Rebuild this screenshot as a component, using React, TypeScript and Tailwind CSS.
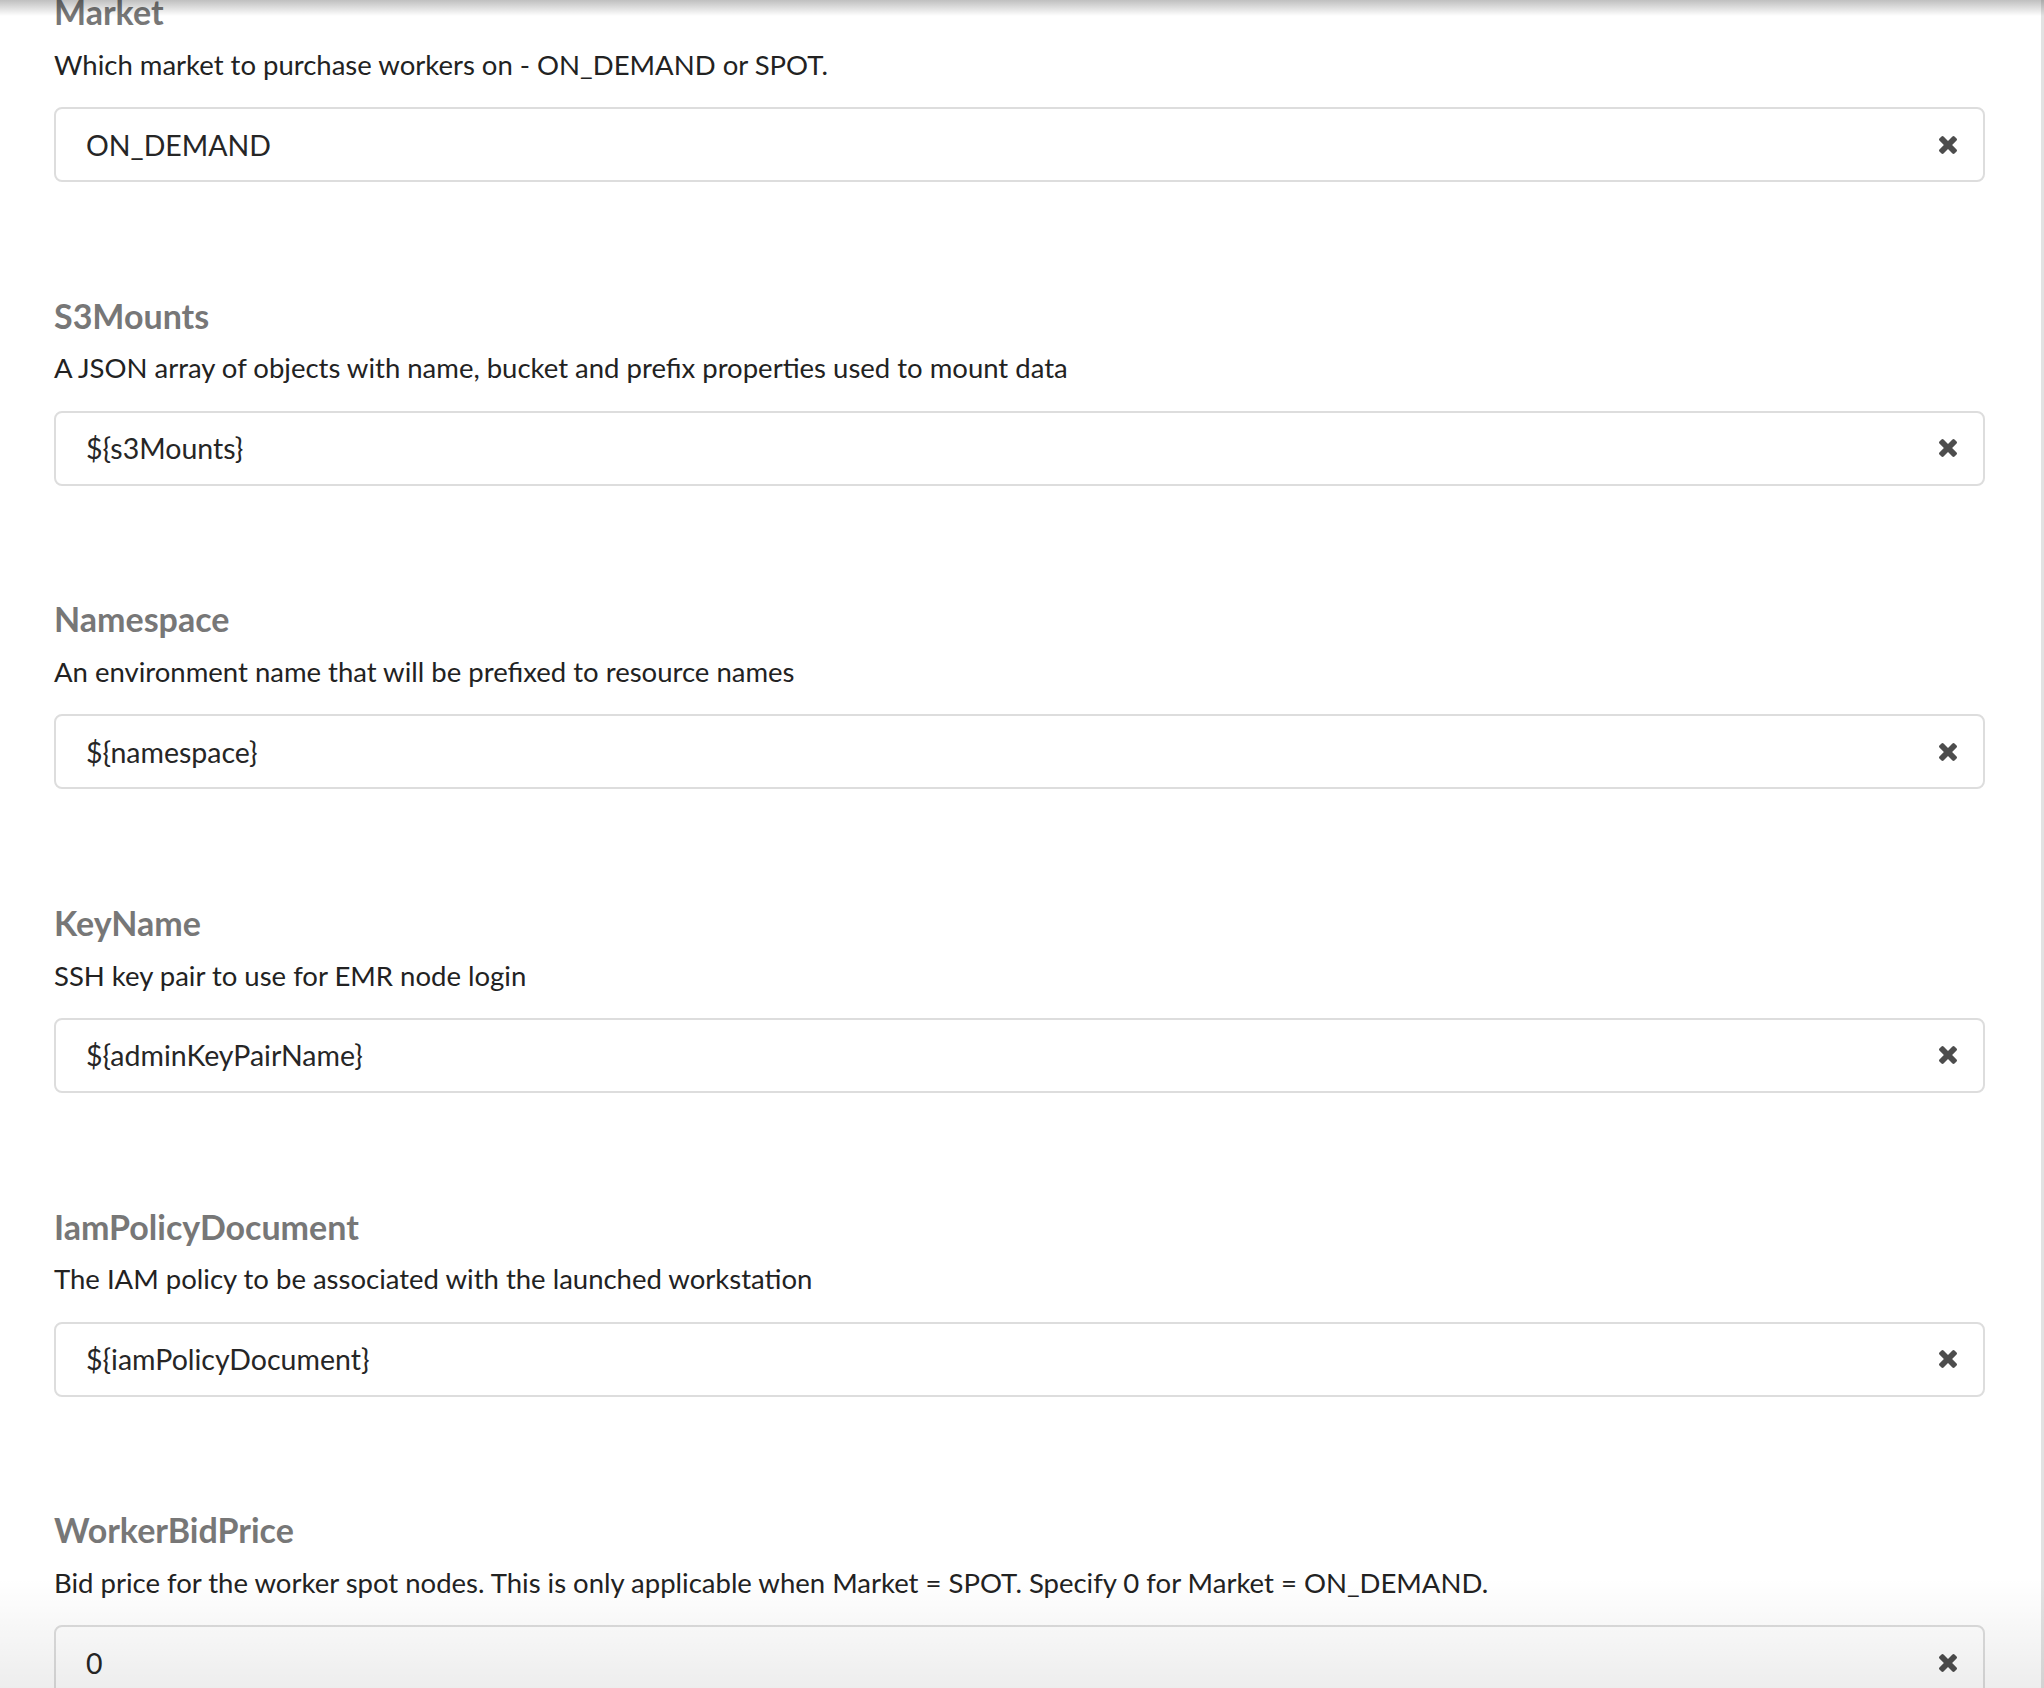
import React from 'react';

interface Field {
  name: string;
  description: string;
  value: string;
}

const fields: Field[] = [
  {
    name: 'Market',
    description: 'Which market to purchase workers on - ON_DEMAND or SPOT.',
    value: 'ON_DEMAND',
  },
  {
    name: 'S3Mounts',
    description: 'A JSON array of objects with name, bucket and prefix properties used to mount data',
    value: '${s3Mounts}',
  },
  {
    name: 'Namespace',
    description: 'An environment name that will be prefixed to resource names',
    value: '${namespace}',
  },
  {
    name: 'KeyName',
    description: 'SSH key pair to use for EMR node login',
    value: '${adminKeyPairName}',
  },
  {
    name: 'IamPolicyDocument',
    description: 'The IAM policy to be associated with the launched workstation',
    value: '${iamPolicyDocument}',
  },
  {
    name: 'WorkerBidPrice',
    description:
      'Bid price for the worker spot nodes. This is only applicable when Market = SPOT. Specify 0 for Market = ON_DEMAND.',
    value: '0',
  },
];

// thick "times" glyph, same shape as the font-awesome one
const ClearIcon = () => (
  <svg viewBox="110 366 1188 1188" className="h-[18px] w-[18px]" aria-hidden>
    <path
      fill="currentColor"
      d="M1298 1322q0 40-28 68l-136 136q-28 28-68 28t-68-28l-294-294-294 294q-28 28-68 28t-68-28l-136-136q-28-28-28-68t28-68l294-294-294-294q-28-28-28-68t28-68l136-136q28-28 68-28t68 28l294 294 294-294q28-28 68-28t68 28l136 136q28 28 28 68t-28 68l-294 294 294 294q28 28 28 68z"
    />
  </svg>
);

const ParamField = ({ field }: { field: Field }) => (
  <div className="mb-[116.6px]">
    <h3 className="h-[34px] text-[34px] leading-[34px] font-bold text-[#777777]">{field.name}</h3>
    <p className="mt-[17.7px] h-[36px] text-[27.5px] leading-[36px] text-[#222222]">{field.description}</p>
    <div className="mt-[24.3px] flex h-[75px] items-center rounded-[8px] border-2 border-[#dddddd] bg-white pr-[26px] pl-[30px]">
      <input
        readOnly
        value={field.value}
        className="flex-1 bg-transparent text-[28.5px] leading-[34px] text-[#262626] outline-none"
      />
      <button type="button" className="flex items-center text-[#4d4d4d]">
        <ClearIcon />
      </button>
    </div>
  </div>
);

export default function App() {
  return (
    <div className="relative flex h-[1688px] overflow-hidden bg-white font-['Lato','Liberation_Sans',sans-serif]">
      <main className="flex-1 pr-[56px] pl-[54px]">
        <div className="-mt-[4.8px]">
          {fields.map((field) => (
            <ParamField key={field.name} field={field} />
          ))}
        </div>
      </main>
      <div className="w-[3px] bg-[#e2e2e2]" />

      {/* shadows from the fixed header and footer */}
      <div className="pointer-events-none absolute inset-x-0 top-0 h-[16px] bg-linear-to-b from-black/25 to-transparent" />
      <div className="pointer-events-none absolute inset-x-0 bottom-0 h-[110px] bg-linear-to-b from-transparent to-black/[0.07]" />
    </div>
  );
}
